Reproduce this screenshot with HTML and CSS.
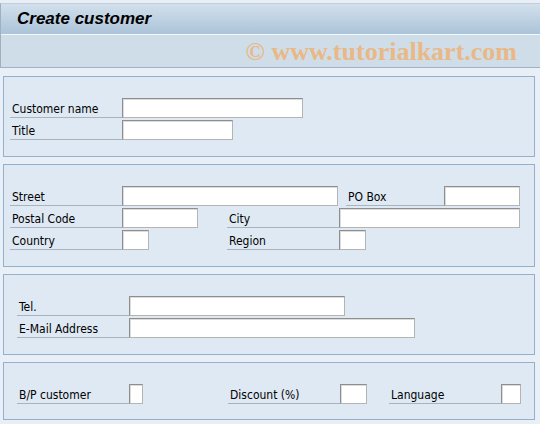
FILE: index.html
```html
<!DOCTYPE html>
<html>
<head>
<meta charset="utf-8">
<link rel="stylesheet" href="styles.css">
</head>
<body>
<div class="header">
  <div class="titlebar"><span class="title">Create customer</span></div>
  <div class="toolbar"><span class="watermark">© www.tutorialkart.com</span></div>
</div>
<div class="content">
  <div class="group">
    <div class="row">
      <label class="lbl l1">Customer name</label><span class="inp w180"></span>
    </div>
    <div class="row">
      <label class="lbl l1">Title</label><span class="inp w111"></span>
    </div>
  </div>
  <div class="group">
    <div class="row">
      <label class="lbl l1">Street</label><span class="inp w216"></span>
      <label class="lbl lpo">PO Box</label><span class="inp w76"></span>
    </div>
    <div class="row">
      <label class="lbl l1">Postal Code</label><span class="inp w76"></span>
      <label class="lbl lc2 after76">City</label><span class="inp w181"></span>
    </div>
    <div class="row">
      <label class="lbl l1">Country</label><span class="inp w27"></span>
      <label class="lbl lc2 after27">Region</label><span class="inp w27"></span>
    </div>
  </div>
  <div class="group">
    <div class="row">
      <label class="lbl l3">Tel.</label><span class="inp w216"></span>
    </div>
    <div class="row">
      <label class="lbl l3">E-Mail Address</label><span class="inp w286"></span>
    </div>
  </div>
  <div class="group g4">
    <div class="row">
      <label class="lbl l3">B/P customer</label><span class="inp w13"></span>
      <label class="lbl ldisc">Discount (%)</label><span class="inp w27"></span>
      <label class="lbl llang">Language</label><span class="inp w20"></span>
    </div>
  </div>
</div>
</body>
</html>
```
FILE: styles.css
```css
html, body {
  margin: 0;
  padding: 0;
  background: #e8eff7;
}
body {
  width: 540px;
  height: 424px;
  overflow: hidden;
  font-family: "DejaVu Sans Condensed", "DejaVu Sans", Tahoma, sans-serif;
  font-size: 12px;
  color: #000;
}
.header {
  margin-top: 3px;
  border-top: 1px solid #c3ced9;
  border-left: 1px solid #9fb0c2;
  border-bottom: 1px solid #9db2c8;
}
.titlebar {
  height: 30px;
  background: linear-gradient(#d3e0ec, #abc3d9);
  border-bottom: 1px solid #f4f8fb;
  display: flex;
  align-items: center;
  padding-left: 16px;
}
.title {
  font-family: "Liberation Sans", Arial, sans-serif;
  font-weight: bold;
  font-style: italic;
  font-size: 17px;
  color: #000;
}
.toolbar {
  height: 32px;
  background: #cfdde8;
  display: flex;
  align-items: center;
  justify-content: flex-end;
  padding-right: 23px;
}
.watermark {
  font-family: "Liberation Serif", "Times New Roman", serif;
  font-weight: bold;
  font-size: 26px;
  color: #e9b887;
  padding-top: 2px;
}
.content {
  padding: 8px 5px 0 3px;
  display: flex;
  flex-direction: column;
  gap: 7px;
}
.group {
  border: 1px solid #94b1cc;
  background: #dee9f3;
  padding: 21px 0 16px 0;
  display: flex;
  flex-direction: column;
  gap: 2px;
}
.g4 { padding-bottom: 15px; }
.row {
  display: flex;
  height: 20px;
}
.lbl {
  box-sizing: border-box;
  height: 20px;
  border-bottom: 1px solid #a9b3bd;
  padding: 4px 0 0 2px;
  line-height: 15px;
  white-space: nowrap;
}
.l1 { margin-left: 6px; width: 112px; }
.l3 { margin-left: 13px; width: 112px; }
.lpo { margin-left: 8px; width: 98px; }
.lc2 { width: 112px; }
.after76 { margin-left: 29px; }
.after27 { margin-left: 78px; }
.ldisc { margin-left: 85px; width: 112px; }
.llang { margin-left: 22px; width: 112px; }
.inp {
  box-sizing: border-box;
  height: 20px;
  background: #fff;
  border: 1px solid #b4b4b4;
  border-top-color: #8e8e8e;
  border-left-color: #8e8e8e;
  box-shadow: inset 1px 1px 0 #dcdcdc;
}
.w13 { width: 14px; }
.w20 { width: 20px; }
.w27 { width: 27px; }
.w76 { width: 76px; }
.w111 { width: 111px; }
.w180 { width: 181px; }
.w181 { width: 181px; }
.w216 { width: 216px; }
.w286 { width: 286px; }
```
